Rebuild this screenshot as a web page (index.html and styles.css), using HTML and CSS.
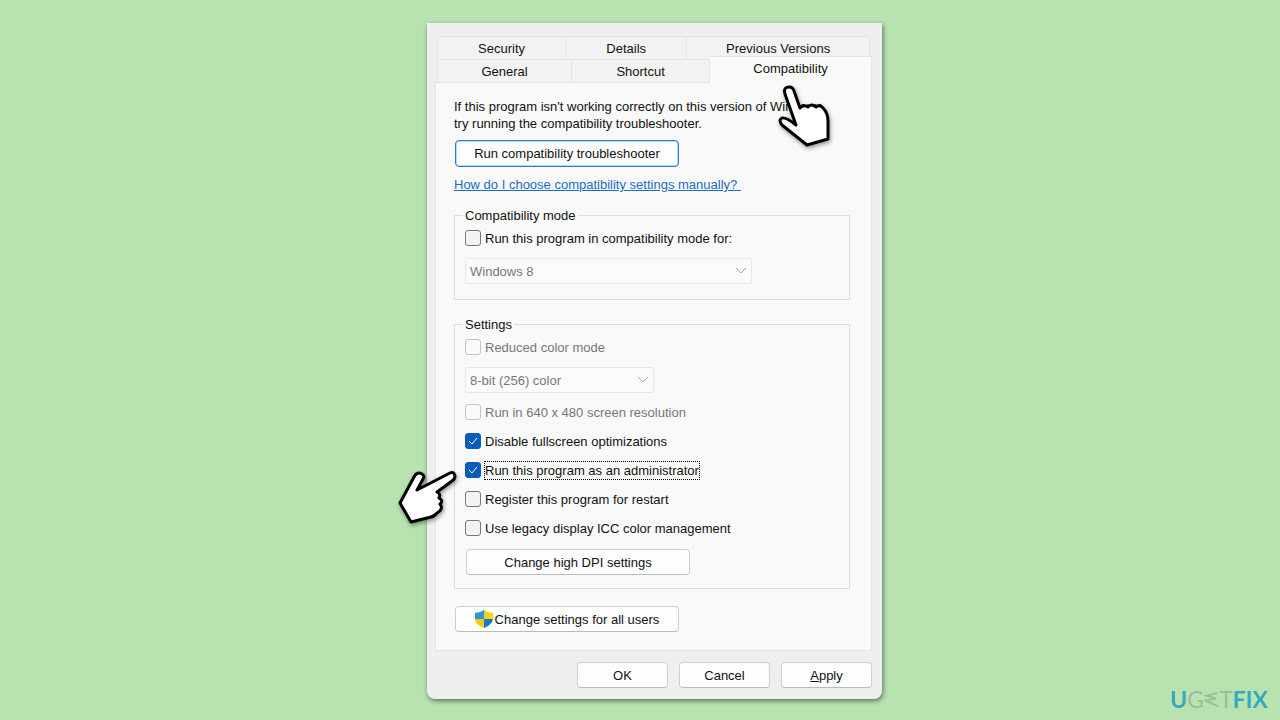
FILE: index.html
```
<!DOCTYPE html>
<html lang="en">
<head>
    <meta charset="UTF-8">
    <meta name="viewport" content="width=device-width, initial-scale=1.0">
    <title>Compatibility Properties</title>
    <link rel="stylesheet" href="styles.css">
</head>
<body>
    <main class="window">
        <div class="tabs" role="tablist">
            <div class="tab-row">
                <button class="tab tab-security" role="tab">Security</button>
                <button class="tab tab-details" role="tab">Details</button>
                <button class="tab tab-versions" role="tab">Previous Versions</button>
            </div>
            <div class="tab-row tab-row-front">
                <button class="tab tab-general" role="tab">General</button>
                <button class="tab tab-shortcut" role="tab">Shortcut</button>
                <button class="tab tab-active" role="tab" aria-selected="true">Compatibility</button>
            </div>
        </div>

        <section class="panel">
            <p class="intro">If this program isn't working correctly on this version of Windows,<br>try running the compatibility troubleshooter.</p>
            <button class="btn btn-wide btn-default">Run compatibility troubleshooter</button>
            <a class="help-link" href="#">How do I choose compatibility settings manually?&nbsp;</a>

            <fieldset class="group">
                <legend>Compatibility mode</legend>
                <div class="option option-select">
                    <input type="checkbox" id="compat-mode">
                    <label for="compat-mode">Run this program in compatibility mode for:</label>
                </div>
                <select class="select-os" aria-label="Windows version" disabled>
                    <option>Windows 8</option>
                </select>
            </fieldset>

            <fieldset class="group group-settings">
                <legend>Settings</legend>
                <div class="option option-select">
                    <input type="checkbox" id="reduced-color" disabled>
                    <label for="reduced-color">Reduced color mode</label>
                </div>
                <select class="select-color" aria-label="Color depth" disabled>
                    <option>8-bit (256) color</option>
                </select>
                <div class="option">
                    <input type="checkbox" id="low-res" disabled>
                    <label for="low-res">Run in 640 x 480 screen resolution</label>
                </div>
                <div class="option">
                    <input type="checkbox" id="fullscreen" checked>
                    <label for="fullscreen">Disable fullscreen optimizations</label>
                </div>
                <div class="option">
                    <input type="checkbox" id="run-admin" checked>
                    <label class="focused" for="run-admin">Run this program as an administrator</label>
                </div>
                <div class="option">
                    <input type="checkbox" id="restart">
                    <label for="restart">Register this program for restart</label>
                </div>
                <div class="option">
                    <input type="checkbox" id="legacy-icc">
                    <label for="legacy-icc">Use legacy display ICC color management</label>
                </div>
                <button class="btn btn-wide">Change high DPI settings</button>
            </fieldset>

            <button class="btn btn-wide">
                <svg class="shield" viewBox="0 0 18 18" width="18" height="18" aria-hidden="true">
                    <path d="M9 0Q5 3 0 3V9H9Z" fill="#2596dc"/>
                    <path d="M9 0Q13 3 18 3V9H9Z" fill="#fcd116"/>
                    <path d="M0 9H9V18Q1 15 0 9Z" fill="#fbc70c"/>
                    <path d="M18 9H9V18Q17 15 18 9Z" fill="#1878c8"/>
                </svg>
                Change settings for all users
            </button>
        </section>

        <footer class="actions">
            <button class="btn">OK</button>
            <button class="btn">Cancel</button>
            <button class="btn"><span><u>A</u>pply</span></button>
        </footer>

        <svg class="hand hand-tab" viewBox="10 8 58 66" width="58" height="66" aria-hidden="true">
            <path d="M31 50L20 19Q18 12 24 12Q28 12 29 16L35 33Q38 29 43 32Q46 28 51 32Q55 29 58 33Q63 38 63 46V64L42 70L17 50Q13 45 17 43Q21 42 31 50Z"/>
        </svg>
        <svg class="hand hand-option" viewBox="6 68 64 60" width="64" height="60" aria-hidden="true">
            <path d="M27 90L60 73Q64 71 65 76Q65 79 62 81L47 92Q51 94 49 98Q54 101 50 104Q54 109 47 113Q44 117 37 118L21 122L10 103L24 77Q27 71 32 74Q35 76 33 79Z"/>
        </svg>
    </main>

    <div class="brand">
        <b>U</b><span>G</span><svg viewBox="0 0 16 18" width="15" height="17" aria-hidden="true"><path d="M14 2L3 5L13 8L1 10L15 16"/></svg><span>T</span><b>FIX</b>
    </div>
</body>
</html>
```
FILE: styles.css
```
* {
    box-sizing: border-box;
}

body {
    margin: 0;
    padding: 23px 0 22px 29px;
    min-height: 100vh;
    display: flex;
    justify-content: center;
    align-items: flex-start;
    background-color: #b8e3b0;
    color: #111;
    font-family: "Liberation Sans", Arial, sans-serif;
    font-size: 13px;
    line-height: 17px;
}

button, select, input {
    font: inherit;
    color: inherit;
    margin: 0;
}

.window {
    position: relative;
    width: 455px;
    padding: 13px 10px 11px 8px;
    background-color: #efefef;
    border-radius: 0 0 8px 8px;
    box-shadow: 1px 2px 5px rgba(0, 0, 0, 0.5);
}

/* Tabs */
.tab-row {
    display: flex;
    margin: 0 2px;
}

.tab-row-front {
    margin-right: 0;
}

.tab {
    height: 23px;
    padding: 0;
    background-color: #f2f2f2;
    border: 1px solid #e5e5e5;
    border-width: 1px 1px 0 0;
}

.tab:first-child {
    border-left-width: 1px;
}

.tab-security {
    flex: 128;
}

.tab-details {
    flex: 121;
}

.tab-versions {
    flex: 183;
}

.tab-general {
    flex: 134;
}

.tab-shortcut {
    flex: 138;
}

.tab-active {
    flex: 162;
    height: 27px;
    margin: -3px 0 -1px;
    padding-bottom: 4px;
    background-color: #f9f9f9;
    z-index: 1;
}

.panel {
    padding: 15px 21px 18px 18px;
    background-color: #f9f9f9;
    border: 1px solid #e5e5e5;
}

.intro {
    margin: 0 0 8px;
    white-space: nowrap;
}

/* Buttons */
.btn {
    display: flex;
    align-items: center;
    justify-content: center;
    height: 26px;
    padding: 0;
    background-color: #fdfdfd;
    border: 1px solid #d0d0d0;
    border-bottom-color: #bbb;
    border-radius: 4px;
}

.btn-wide {
    width: 224px;
    margin-left: 1px;
}

.btn-default {
    height: 27px;
    border-color: #2a7bc8;
    box-shadow: inset 0 0 0 1px #b9d8f2;
}

.shield {
    margin-right: 2px;
}

.help-link {
    display: block;
    margin: 9px 0 14px;
    color: #1a6cc8;
}

/* Option groups */
.group {
    margin: 0 0 16px;
    padding: 6px 10px 15px;
    border: 1px solid #dcdcdc;
}

.group-settings {
    padding-top: 6px;
    padding-bottom: 13px;
    margin-bottom: 17px;
}

legend {
    margin-left: -2px;
    padding: 0 2px;
}

.option {
    display: flex;
    align-items: center;
    gap: 4px;
    height: 16px;
    margin-bottom: 13px;
}

.option-select {
    margin-bottom: 12px;
}

input[type="checkbox"] {
    appearance: none;
    width: 16px;
    height: 16px;
    background: #f3f3f3 center no-repeat;
    border: 1px solid #777;
    border-radius: 3px;
}

input[type="checkbox"]:checked {
    background-color: #0a5cb8;
    background-image: url("data:image/svg+xml,%3Csvg xmlns='http://www.w3.org/2000/svg' width='10' height='8'%3E%3Cpath d='M1 4l3 3 5-6' fill='none' stroke='white'/%3E%3C/svg%3E");
    border-color: #0a5cb8;
}

input[type="checkbox"]:disabled {
    background-color: #fafafa;
    border-color: #c4c4c4;
}

input:disabled + label {
    color: #777;
}

.focused {
    outline: 1px dotted #000;
}

select {
    display: block;
    appearance: none;
    height: 26px;
    padding: 0 4px;
    background: #fbfbfb url("data:image/svg+xml,%3Csvg xmlns='http://www.w3.org/2000/svg' width='12' height='8'%3E%3Cpath d='M1 1l5 5 5-5' fill='none' stroke='%23aaa'/%3E%3C/svg%3E") right 4px center no-repeat;
    border: 1px solid #e8e8e8;
    border-radius: 2px;
}

select:disabled {
    color: #777;
    opacity: 1;
}

.select-os {
    width: 287px;
}

.select-color {
    width: 189px;
    margin-bottom: 11px;
}

.actions {
    display: flex;
    justify-content: flex-end;
    gap: 11px;
    margin-top: 11px;
}

.actions .btn {
    width: 91px;
}

/* Pointing hands over the dialog */
.hand {
    position: absolute;
    fill: #fff;
    stroke: #000;
    stroke-width: 3;
    stroke-linejoin: round;
    filter: drop-shadow(1px 2px 2px rgba(0, 0, 0, 0.4));
}

.hand-tab {
    left: 348px;
    top: 60px;
}

.hand-option {
    left: -31px;
    top: 445px;
}

.brand {
    position: fixed;
    right: 12px;
    bottom: 9px;
    display: flex;
    align-items: center;
    color: #35a9bd;
    font-family: Lato, sans-serif;
    font-size: 23px;
    line-height: 24px;
}

.brand span {
    color: #9dbb9b;
}

.brand path {
    fill: none;
    stroke: #9dbb9b;
    stroke-width: 2;
}
```
